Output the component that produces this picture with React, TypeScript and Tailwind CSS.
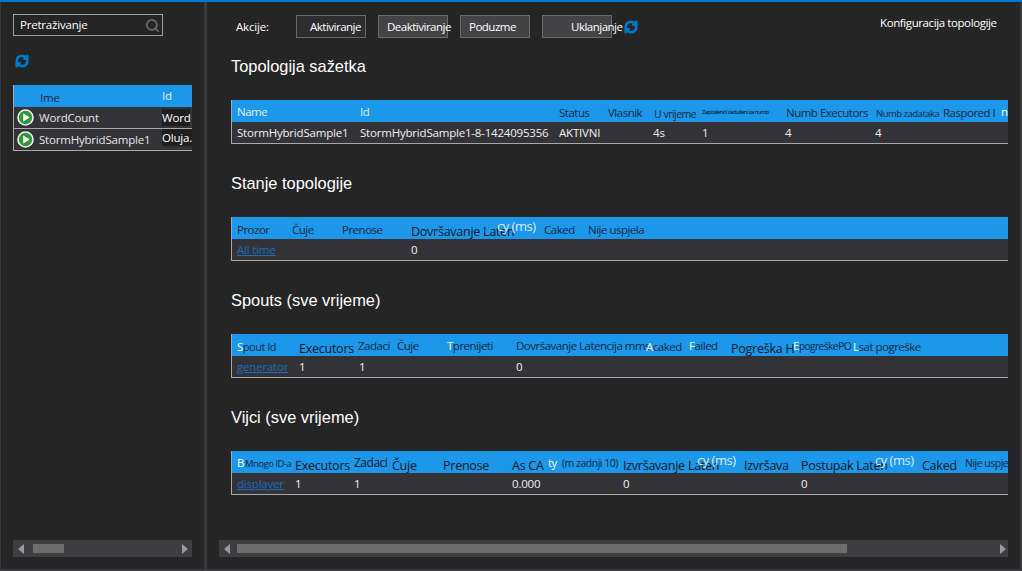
import { ReactNode } from "react";
import { RefreshCw, Search } from "lucide-react";

interface Cell {
    w: number;
    node?: ReactNode;
    cls?: string;
}

const W = ({ children }: { children: ReactNode }) => (
    <span className="text-white">{children}</span>
);

const Cy = () => <span className="text-[#dcecf8] text-[13px]">cy (ms)</span>;

const big = "pt-[7px] text-[#0a1622] text-[12.5px] tracking-[-0.25px]";

const summaryHead: Cell[] = [
    { w: 123, node: <span className="text-[#e6f2fb]">Name</span> },
    { w: 199, node: <span className="text-[#e6f2fb]">Id</span> },
    { w: 49, node: "Status", cls: "pt-0.5" },
    { w: 46, node: "Vlasnik", cls: "pt-0.5" },
    { w: 48, node: <span className="text-[10.5px]">U vrijeme</span>, cls: "pt-1" },
    { w: 84, node: <span className="text-[5.8px] text-black">Zaposlenici zaduženi za numb</span>, cls: "pb-1" },
    { w: 90, node: "Numb Executors", cls: "pt-0.5" },
    { w: 67, node: <span className="text-[9.5px]">Numb zadataka</span>, cls: "pt-0.5" },
    { w: 58, node: "Raspored I", cls: "pt-0.5" },
    { w: 7, node: <W>n</W> },
];
const summaryRow: Cell[] = [
    { w: 123, node: "StormHybridSample1" },
    { w: 199, node: "StormHybridSample1-8-1424095356" },
    { w: 94, node: "AKTIVNI" },
    { w: 49, node: "4s" },
    { w: 83, node: "1" },
    { w: 90, node: "4" },
    { w: 90, node: "4" },
];

const statsHead: Cell[] = [
    { w: 55, node: "Prozor", cls: "pt-0.5" },
    { w: 50, node: "Čuje", cls: "pt-0.5" },
    { w: 69, node: "Prenose", cls: "pt-0.5" },
    { w: 86, node: "Dovršavanje Laten", cls: big },
    { w: 47, node: <Cy />, cls: "pb-1" },
    { w: 44, node: "Caked", cls: "pt-0.5" },
    { w: 100, node: <span className="text-[11.5px]">Nije uspjela</span>, cls: "pt-0.5" },
];
const statsRow: Cell[] = [
    { w: 174, node: <Link>All time</Link> },
    { w: 60, node: "0" },
];

const spoutsHead: Cell[] = [
    { w: 62, node: <><W>S</W><span className="text-[11px]">pout Id</span></>, cls: "pt-0.5" },
    { w: 59, node: "Executors", cls: big },
    { w: 39, node: "Zadaci" },
    { w: 50, node: "Čuje" },
    { w: 69, node: <><W>T</W>prenijeti</> },
    { w: 130, node: "Dovršavanje Latencija mms" },
    { w: 43, node: <><W>A</W>caked</>, cls: "pt-0.5" },
    { w: 42, node: <><W>F</W>ailed</> },
    { w: 62, node: "Pogreška H", cls: big },
    { w: 45, node: <><W>E</W><span className="text-[10px]">pogreške</span></> },
    { w: 15, node: <span className="text-[10.5px]">PO</span> },
    { w: 120, node: <><W>L</W>sat pogreške</>, cls: "pt-0.5" },
];
const spoutsRow: Cell[] = [
    { w: 62, node: <Link>generator</Link> },
    { w: 60, node: "1" },
    { w: 157, node: "1" },
    { w: 60, node: "0" },
];

const boltsHead: Cell[] = [
    { w: 8, node: <W>B</W> },
    { w: 50, node: <span className="text-[9.5px]">Mnogo ID-a</span> },
    { w: 59, node: "Executors", cls: big },
    { w: 38, node: "Zadaci", cls: "text-[#0a1622] text-[12px]" },
    { w: 51, node: "Čuje", cls: big },
    { w: 69, node: "Prenose", cls: big },
    { w: 36, node: "As CA", cls: big },
    { w: 14, node: <W>ty</W> },
    { w: 61, node: <span className="text-[10.5px]">(m zadnji 10)</span> },
    { w: 74, node: "Izvršavanje Laten", cls: big },
    { w: 47, node: <Cy />, cls: "pb-1" },
    { w: 57, node: "Izvršava", cls: big },
    { w: 74, node: "Postupak Laten", cls: big },
    { w: 47, node: <Cy />, cls: "pb-1" },
    { w: 43, node: "Caked", cls: big },
    { w: 50, node: <span className="text-[10.5px]">Nije uspjela</span> },
];
const boltsRow: Cell[] = [
    { w: 58, node: <Link>displayer</Link> },
    { w: 59, node: "1" },
    { w: 158, node: "1" },
    { w: 111, node: "0.000" },
    { w: 178, node: "0" },
    { w: 60, node: "0" },
];

function Link({ children }: { children: ReactNode }) {
    return <span className="text-[#1a6bbd] underline">{children}</span>;
}

const Refresh = () => (
    <RefreshCw size={14} strokeWidth={4.5} className="text-[#007acc]" />
);

const PlayBadge = () => (
    <svg width="17" height="17" viewBox="0 0 17 17" className="shrink-0">
        <circle cx="8.5" cy="8.5" r="7.5" fill="#2f9a36" stroke="#f2f2f2" strokeWidth="1.6" />
        <path d="M6.2 4.4 L12.6 8.5 L6.2 12.6 Z" fill="#ffffff" />
    </svg>
);

const Arrow = ({ right }: { right?: boolean }) => (
    <svg width="6" height="10" viewBox="0 0 6 10" className="shrink-0">
        <path d={right ? "M0 0 L6 5 L0 10 Z" : "M6 0 L0 5 L6 10 Z"} fill="#9a9a9a" />
    </svg>
);

const Scrollbar = ({ left, thumb, gap }: { left: number; thumb: number; gap: number }) => (
    <div className="flex h-[17px] items-center bg-[#3e3e42] px-[5px]">
        <Arrow />
        <div style={{ width: left }} className="shrink-0" />
        <div style={{ width: thumb }} className="h-[9px] shrink-0 bg-[#6e6e6e]" />
        <div style={{ width: gap }} className="shrink-0" />
        <Arrow right />
    </div>
);

const Row = ({ cells, className }: { cells: Cell[]; className: string }) => (
    <div className={`flex items-center pl-[5px] ${className}`}>
        {cells.map((c, i) => (
            <div
                key={i}
                style={{ width: c.w }}
                className={`shrink-0 whitespace-nowrap ${c.cls ?? ""}`}
            >
                {c.node}
            </div>
        ))}
    </div>
);

const Section = ({
    title,
    head,
    row,
}: {
    title: string;
    head: Cell[];
    row: Cell[];
}) => (
    <section className="w-[777px]">
        <h2 className="h-[22px] font-['Liberation_Sans',sans-serif] text-[16.4px] leading-[22px] tracking-normal text-white">
            {title}
        </h2>
        <div className="mt-[23px] border-b border-l border-[#a8a8a8]">
            <Row cells={head} className="h-[22px] bg-[#1c97ea] pt-px tracking-[-0.5px] text-[#10283c]" />
            <Row cells={row} className="h-[21px] bg-[#333337] pt-px text-[#f1f1f1]" />
        </div>
    </section>
);

const ActionButton = ({ label, cls }: { label: string; cls: string }) => (
    <button className={`h-[23px] w-[70px] border border-[#6a6a6a] whitespace-nowrap text-left tracking-[-0.5px] text-white ${cls}`}>
        {label}
    </button>
);

export default function App() {
    return (
        <div className="flex h-[571px] w-[1022px] flex-col overflow-hidden bg-[#252526] font-['Open_Sans',sans-serif] text-[11.5px] tracking-[-0.2px]">
            <div className="h-0.5 bg-[#007acc]" />
            <div className="flex min-h-0 flex-1 border-b-2 border-l border-r-2 border-[#3a3a3e]">
                {/* left panel */}
                <aside className="flex w-[203px] shrink-0 flex-col pl-3 pr-3 pt-3">
                    <div className="flex h-[22px] w-[150px] items-center justify-between border border-[#a0a0a0] pl-1.5 pr-0.5 text-white">
                        Pretraživanje
                        <Search size={15} strokeWidth={2.6} className="text-[#6c6c6c]" />
                    </div>
                    <div className="mt-[18px] ml-0.5 h-[15px]">
                        <Refresh />
                    </div>
                    <div className="mt-4 w-[179px] border-b border-l border-[#a8a8a8]">
                        <div className="flex h-[22px] items-center bg-[#1c97ea] text-[#10283c]">
                            <span className="ml-[26px] w-[122px] shrink-0 pt-1">Ime</span>
                            <span className="text-[#e6f2fb]">Id</span>
                        </div>
                        <div className="flex h-[22px] items-center overflow-hidden border-b border-[#a8a8a8] bg-[#333337] pl-[3px] text-[#e6e6e6]">
                            <PlayBadge />
                            <span className="ml-[5px] w-[123px] shrink-0">WordCount</span>
                            <span className="bg-[#1e1e1e] text-white">Word</span>
                        </div>
                        <div className="flex h-[21px] items-center overflow-hidden bg-[#333337] pl-[3px] text-[#e6e6e6]">
                            <PlayBadge />
                            <span className="ml-[5px] w-[123px] shrink-0 whitespace-nowrap">StormHybridSample1</span>
                            <span className="mb-1 whitespace-nowrap bg-[#1e1e1e] text-white">Oluja.</span>
                        </div>
                    </div>
                    <div className="mt-auto mb-3 w-[179px]">
                        <Scrollbar left={9} thumb={31} gap={118} />
                    </div>
                </aside>
                <div className="w-[3px] shrink-0 bg-[#3a3a3e]" />
                {/* main panel */}
                <main className="flex min-w-0 flex-1 flex-col pl-3 pt-[13px]">
                    <div className="flex h-[23px] items-center">
                        <span className="ml-[17px] w-[60px] text-white">Akcije:</span>
                        <div className="flex items-center gap-3">
                            <ActionButton label="Aktiviranje" cls="bg-[#2d2d30] pl-[13px]" />
                            <ActionButton label="Deaktiviranje" cls="bg-[#434346] pl-2" />
                            <ActionButton label="Poduzme" cls="bg-[#434346] pl-2" />
                            <ActionButton label="Uklanjanje" cls="bg-[#434346] pl-7" />
                        </div>
                        <div className="ml-3">
                            <Refresh />
                        </div>
                        <span className="ml-[242px] pb-[7px] tracking-[-0.4px] text-white">Konfiguracija topologije</span>
                    </div>
                    <div className="ml-3 mt-[17px] flex flex-col gap-7">
                        <Section title="Topologija sažetka" head={summaryHead} row={summaryRow} />
                        <Section title="Stanje topologije" head={statsHead} row={statsRow} />
                        <Section title="Spouts (sve vrijeme)" head={spoutsHead} row={spoutsRow} />
                        <Section title="Vijci (sve vrijeme)" head={boltsHead} row={boltsRow} />
                    </div>
                    <div className="mt-auto mb-3 w-[789px]">
                        <Scrollbar left={7} thumb={610} gap={153} />
                    </div>
                </main>
            </div>
        </div>
    );
}
